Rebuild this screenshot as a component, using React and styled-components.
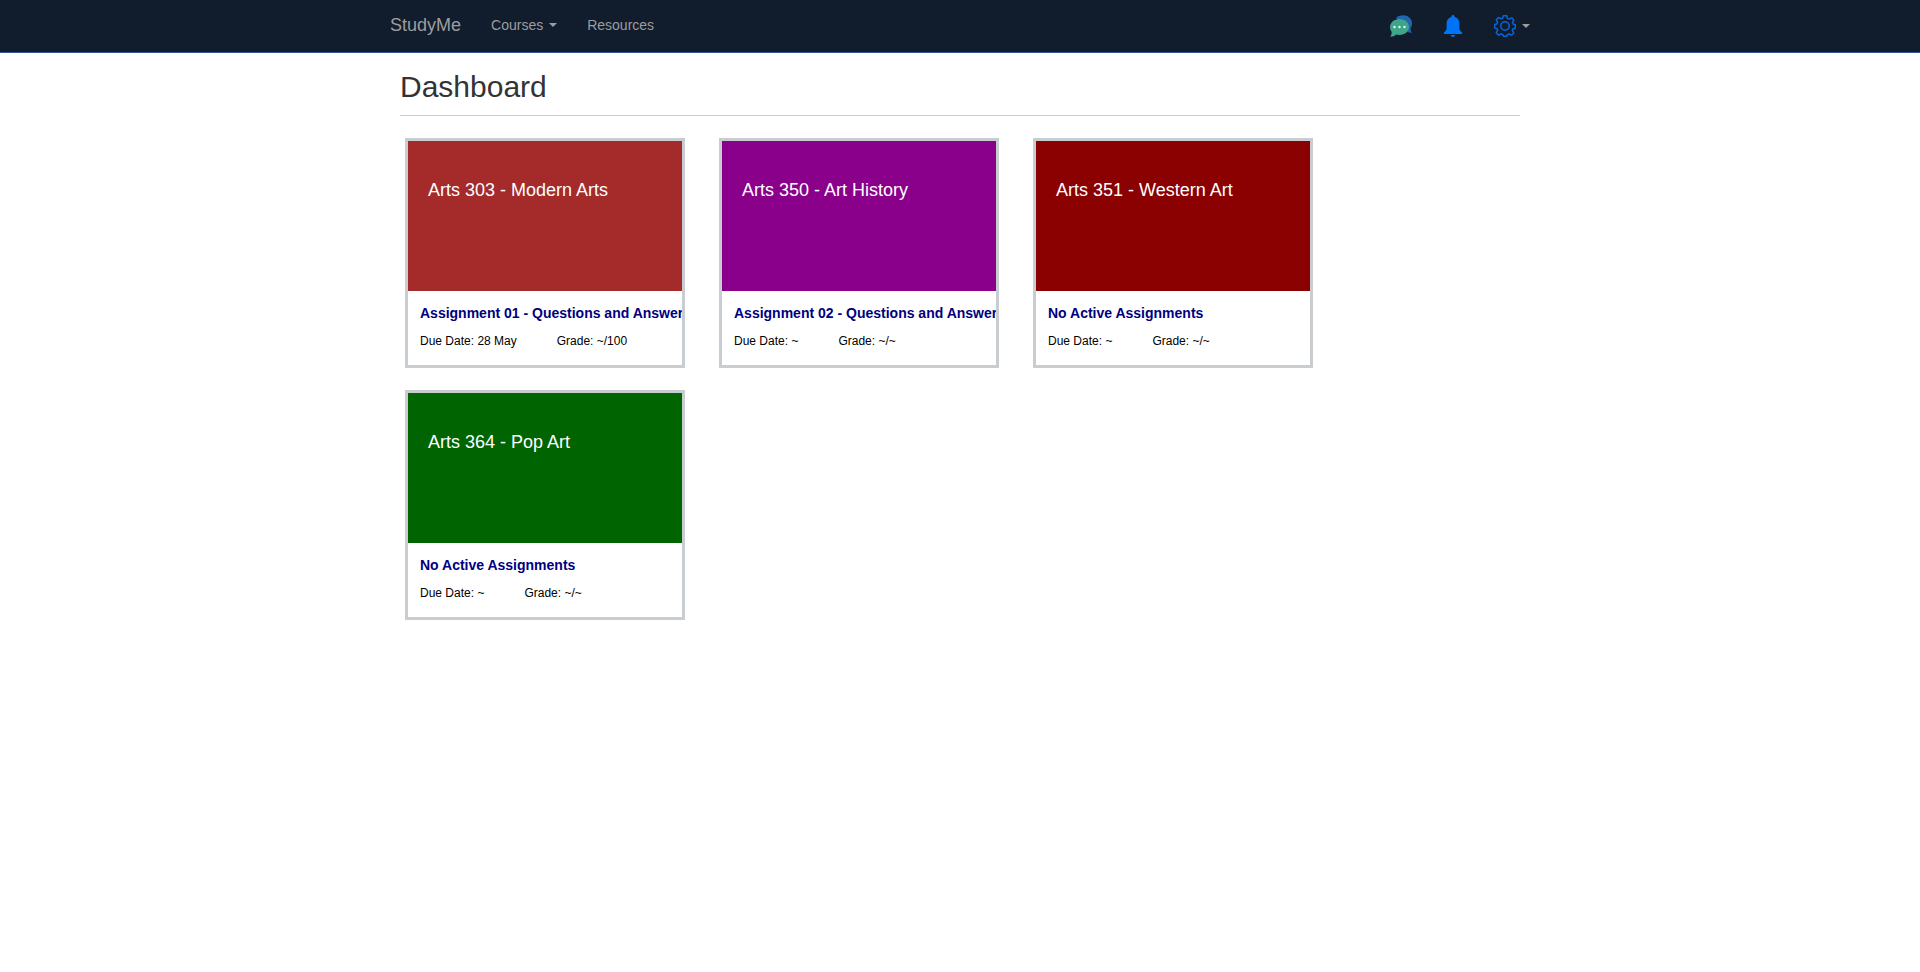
import React from "react";
import styled, { createGlobalStyle } from "styled-components";

const GlobalStyle = createGlobalStyle`
  *, *::before, *::after { box-sizing: border-box; }
  body {
    margin: 0;
    background: #fff;
    color: #333;
    font-family: "Liberation Sans", Arial, sans-serif;
    font-size: 14px;
    line-height: 20px;
  }
`;

const Navbar = styled.nav`
  background: #111c2d;
  border-bottom: 1px solid #34559b;
`;

const NavInner = styled.div`
  display: flex;
  justify-content: space-between;
  max-width: 1170px;
  margin: 0 auto;
`;

const NavGroup = styled.div`
  display: flex;
  align-items: flex-start;
`;

const NavLink = styled.a`
  display: block;
  padding: 15px;
  color: #9d9d9d;
  font-size: ${(p) => (p.$brand ? "18px" : "14px")};
  line-height: 20px;
  text-decoration: none;
  &:hover { color: #fff; }
`;

const NavButton = styled.button`
  display: flex;
  align-items: center;
  gap: 6px;
  padding: 15px;
  border: 0;
  background: none;
  color: #9d9d9d;
  font: inherit;
  line-height: 20px;
  cursor: pointer;
  &:hover { color: #fff; }
`;

const Caret = styled.span`
  border-top: 4px solid currentColor;
  border-right: 4px solid transparent;
  border-left: 4px solid transparent;
`;

const Icon = styled.svg`
  display: block;
  width: 22px;
  height: 22px;
`;

const Page = styled.main`
  max-width: 1120px;
  margin: 0 auto;
`;

const PageTitle = styled.h1`
  margin: 0 0 22px;
  padding: 16px 0 11px;
  border-bottom: 1px solid #ccc;
  font-size: 30px;
  font-weight: 400;
  line-height: 35px;
`;

const Cards = styled.div`
  display: flex;
  flex-wrap: wrap;
  gap: 22px 34px;
  padding: 0 5px;
`;

const Card = styled.article`
  width: 280px;
  border: 3px solid #c7cdd1;
  overflow: hidden;
`;

const Banner = styled.div`
  height: 150px;
  padding: 39px 20px;
  background: ${(p) => p.$color};
`;

const CourseName = styled.h2`
  margin: 0;
  color: #fff;
  font-size: 18px;
  font-weight: 400;
  line-height: 20px;
`;

const CardBody = styled.div`
  padding: 12px 12px 14px;
`;

const Assignment = styled.a`
  display: block;
  color: navy;
  font-size: 14px;
  font-weight: 700;
  line-height: 20px;
  text-decoration: none;
  white-space: nowrap;
`;

const Facts = styled.div`
  display: flex;
  gap: 40px;
  padding-top: 8px;
  color: #000;
  font-size: 12px;
  line-height: 20px;
`;

const courses = [
  { name: "Arts 303 - Modern Arts", color: "brown", task: "Assignment 01 - Questions and Answers", due: "28 May", grade: "~/100" },
  { name: "Arts 350 - Art History", color: "darkmagenta", task: "Assignment 02 - Questions and Answers", due: "~", grade: "~/~" },
  { name: "Arts 351 - Western Art", color: "darkred", task: "No Active Assignments", due: "~", grade: "~/~" },
  { name: "Arts 364 - Pop Art", color: "darkgreen", task: "No Active Assignments", due: "~", grade: "~/~" },
];

const ChatIcon = () => (
  <Icon viewBox="0 0 22 22" aria-hidden="true">
    <path d="M13 0.2C18 .2 22 3.700 22 8.200c0 2-.6 3.700-1.500 5 0 1.800.4 3.300 1.500 4.600-1.900.1-3.600-.3-5-1.200L6 3C7.500 1.200 10 .2 13 .2z" fill="#2165ae" />
    <path d="M9.500 4c5.200 0 9.500 3.600 9.500 8s-4.300 8-9.500 8c-1.200 0-2.300-.2-3.300-.5C4.600 21 2.700 21.700.3 21.800c1-1.500 1.500-3.100 1.400-5C.6 15.500 0 13.800 0 12c0-4.400 4.300-8 9.500-8z" fill="#3da58a" />
    <g fill="#e6f5ef">
      <circle cx="4.500" cy="12" r="1.200" />
      <circle cx="9.500" cy="12" r="1.200" />
      <circle cx="14.500" cy="12" r="1.200" />
    </g>
  </Icon>
);

const BellIcon = () => (
  <Icon viewBox="0 0 22 22" aria-hidden="true">
    <path d="M11 0c.9 0 1.500.6 1.500 1.400v.6c3 .7 4.900 3.100 4.900 6.300v5.200c0 1.500.9 2.300 2.400 3.700.6.600.5 1.800-.2 1.800H2.400c-.7 0-.8-1.200-.2-1.800 1.500-1.400 2.400-2.200 2.400-3.700V8.300c0-3.200 1.900-5.600 4.900-6.300v-.6C9.500.6 10.100 0 11 0zM8.800 20h4.400c-.2 1.200-1.100 2-2.200 2s-2-.8-2.200-2z" fill="#0073f8" />
  </Icon>
);

const GearIcon = () => (
  <Icon viewBox="0 0 22 22" fill="none" stroke="#0666dc" strokeWidth="1.500" strokeLinejoin="round" aria-hidden="true">
    <path d="M9.700.8h2.600q.6 0 .7.600l.3 2q1.100.3 2 .8l1.700-1.200q.5-.4.900 0l1.600 1.700q.5.500.1 1l-1.100 1.500q.6 1 .8 2l1.500.2q.5.100.5.700v2.600q0 .6-.5.700l-1.700.3q-.3 1-.8 1.900l1.200 1.700q.3.500 0 .9L17.700 20q-.4.400-.9 0l-1.700-1.200q-.9.500-1.900.8l-.3 1.300q-.1.400-.6.400H9.700q-.5 0-.6-.4l-.3-1.400q-1-.2-1.900-.7L5.300 20q-.5.300-.9-.1l-1.900-1.900q-.3-.4 0-.9l1.200-1.700q-.5-.9-.8-1.900l-1.700-.3q-.5-.1-.5-.7V9.900q0-.6.5-.7l1.700-.3q.3-1 .8-1.900L2.500 5.400q-.3-.5 0-.9l1.700-1.700q.5-.4 1-.1l1.600 1.200q.9-.5 2-.8l.3-1.800q.1-.5.6-.5z" />
    <circle cx="11" cy="11" r="4.200" />
  </Icon>
);

export default function App() {
  return (
    <>
      <GlobalStyle />
      <Navbar>
        <NavInner>
          <NavGroup>
            <NavLink href="#home" $brand>StudyMe</NavLink>
            <NavButton type="button" aria-haspopup="true">Courses<Caret /></NavButton>
            <NavLink href="#resources">Resources</NavLink>
          </NavGroup>
          <NavGroup>
            <NavLink href="#messages" aria-label="Messages"><ChatIcon /></NavLink>
            <NavLink href="#notifications" aria-label="Notifications"><BellIcon /></NavLink>
            <NavButton type="button" aria-haspopup="true" aria-label="Settings"><GearIcon /><Caret /></NavButton>
          </NavGroup>
        </NavInner>
      </Navbar>
      <Page>
        <PageTitle>Dashboard</PageTitle>
        <Cards>
          {courses.map((c) => (
            <Card key={c.name}>
              <Banner $color={c.color}><CourseName>{c.name}</CourseName></Banner>
              <CardBody>
                <Assignment href="#assignment">{c.task}</Assignment>
                <Facts><span>Due Date: {c.due}</span><span>Grade: {c.grade}</span></Facts>
              </CardBody>
            </Card>
          ))}
        </Cards>
      </Page>
    </>
  );
}
